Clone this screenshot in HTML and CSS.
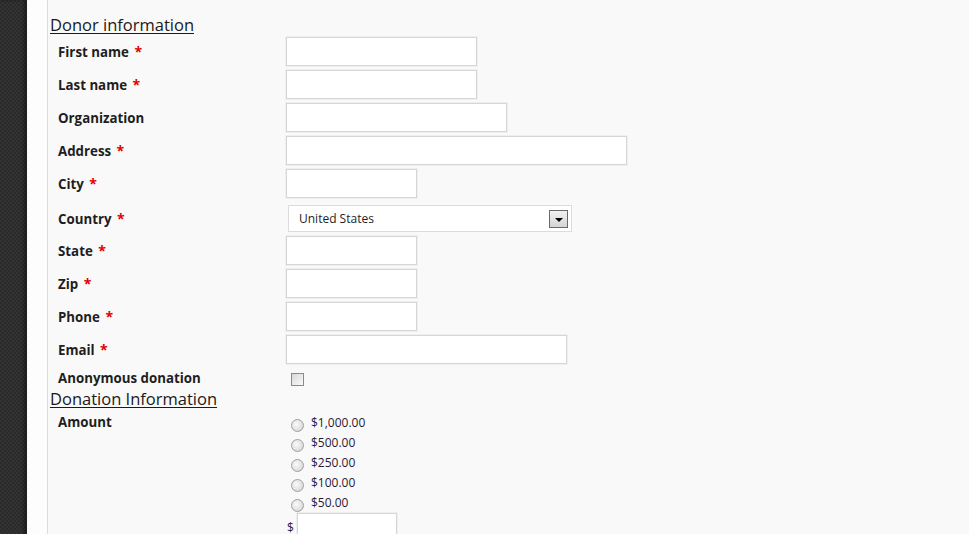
FILE: index.html
```html
<!DOCTYPE html>
<html lang="en">
<head>
    <meta charset="UTF-8">
    <title>Donation</title>
    <link rel="stylesheet" href="styles.css">
</head>
<body>
    <div class="sidebar"></div>
    <div class="gutter"></div>
    <div class="content">
        <h2 class="section-title">Donor information</h2>
        <div class="form-row">
            <label class="field-label">First name <span class="req">*</span></label>
            <input type="text" class="field w190">
        </div>
        <div class="form-row">
            <label class="field-label">Last name <span class="req">*</span></label>
            <input type="text" class="field w190">
        </div>
        <div class="form-row">
            <label class="field-label">Organization</label>
            <input type="text" class="field w220">
        </div>
        <div class="form-row">
            <label class="field-label">Address <span class="req">*</span></label>
            <input type="text" class="field w340">
        </div>
        <div class="form-row">
            <label class="field-label">City <span class="req">*</span></label>
            <input type="text" class="field w130">
        </div>
        <div class="form-row tall">
            <label class="field-label">Country <span class="req">*</span></label>
            <div class="select-box">
                <select class="select">
                    <option>United States</option>
                </select>
                <span class="select-arrow"></span>
            </div>
        </div>
        <div class="form-row">
            <label class="field-label">State <span class="req">*</span></label>
            <input type="text" class="field w130">
        </div>
        <div class="form-row">
            <label class="field-label">Zip <span class="req">*</span></label>
            <input type="text" class="field w130">
        </div>
        <div class="form-row">
            <label class="field-label">Phone <span class="req">*</span></label>
            <input type="text" class="field w130">
        </div>
        <div class="form-row">
            <label class="field-label">Email <span class="req">*</span></label>
            <input type="text" class="field w280">
        </div>
        <div class="form-row small">
            <label class="field-label">Anonymous donation</label>
            <input type="checkbox" class="check">
        </div>

        <h2 class="section-title">Donation Information</h2>
        <div class="amount-row">
            <label class="field-label">Amount</label>
            <div class="amount-list">
                <label class="amount-item"><input type="radio" name="amount" class="radio"> $1,000.00</label>
                <label class="amount-item"><input type="radio" name="amount" class="radio"> $500.00</label>
                <label class="amount-item"><input type="radio" name="amount" class="radio"> $250.00</label>
                <label class="amount-item"><input type="radio" name="amount" class="radio"> $100.00</label>
                <label class="amount-item"><input type="radio" name="amount" class="radio"> $50.00</label>
                <div class="other-amount">
                    <span class="dollar">$</span>
                    <input type="text" class="field w100">
                </div>
            </div>
        </div>
    </div>
</body>
</html>
```

FILE: styles.css
```css
/* Reset */
* {
    margin: 0;
    padding: 0;
    box-sizing: border-box;
}

body {
    display: flex;
    min-height: 534px;
    font-family: 'Open Sans', 'DejaVu Sans', sans-serif;
    background-color: #f9f9f9;
    color: #1e1e1e;
    overflow: hidden;
}

/* barra escura da esquerda */
.sidebar {
    width: 27px;
    flex-shrink: 0;
    background: repeating-conic-gradient(#2a2a2a 0 25%, #333 0 50%) 0 0 / 4px 4px;
    box-shadow: inset -3px 0 3px rgba(0, 0, 0, 0.35);
}

.gutter {
    width: 21px;
    flex-shrink: 0;
    background-color: #fdfdfd;
    border-right: 1px solid #dcdcdc;
}

.content {
    flex: 1;
    padding: 14px 0 0 2px;
}

.section-title {
    font-size: 16.5px;
    font-weight: normal;
    line-height: 22px;
    height: 21px;
    color: #1a1a1a;
    text-decoration: underline;
    text-underline-offset: 2px;
}

.form-row {
    display: flex;
    align-items: center;
    height: 33px;
}

.form-row.tall {
    height: 34px;
    padding-top: 2px;
}

.form-row.tall .select-box {
    margin-top: 1px;
}

.form-row.small {
    height: 22px;
    padding-top: 1px;
}

.field-label {
    width: 236px;
    flex-shrink: 0;
    padding-left: 8px;
    font-size: 13.3px;
    font-weight: bold;
    color: #1e1e1e;
}

.req {
    color: #e00000;
    font-size: 14px;
    margin-left: 2px;
}

.field {
    height: 29px;
    background-color: #fff;
    border: 1px solid #d6d6d6;
    box-shadow: 0 0 0 1px #efefef;
    outline: none;
    font-family: inherit;
    font-size: 12px;
    padding: 0 4px;
}

.w100 { width: 100px; }
.w130 { width: 131px; }
.w190 { width: 191px; }
.w220 { width: 221px; }
.w280 { width: 281px; }
.w340 { width: 341px; }

.select-box {
    position: relative;
    margin-left: 2px;
    width: 284px;
    height: 27px;
}

.select {
    appearance: none;
    width: 100%;
    height: 100%;
    background-color: #fff;
    border: 1px solid #dcdcdc;
    font-family: inherit;
    font-size: 12px;
    color: #1e1e1e;
    padding: 0 0 0 10px;
    outline: none;
}

.select-arrow {
    position: absolute;
    right: 4px;
    top: 5px;
    width: 19px;
    height: 18px;
    border: 1px solid #6a6a6a;
    background: linear-gradient(#f2f2f2, #d4d4d4);
    pointer-events: none;
}

.select-arrow::after {
    content: '';
    position: absolute;
    left: 5px;
    top: 7px;
    border-left: 4px solid transparent;
    border-right: 4px solid transparent;
    border-top: 4px solid #000;
}

.check {
    appearance: none;
    width: 13px;
    height: 13px;
    margin-left: 5px;
    margin-top: 3px;
    border: 1px solid #8a8a8a;
    background: linear-gradient(135deg, #d8d8d8, #fafafa);
}

.amount-row {
    display: flex;
    padding-top: 3px;
}

.amount-row .field-label {
    line-height: 20px;
}

.amount-list {
    display: flex;
    flex-direction: column;
}

.amount-item {
    display: flex;
    align-items: center;
    height: 20px;
    font-size: 12px;
    color: #2a1a3a;
    padding-left: 5px;
}

.radio {
    appearance: none;
    width: 13px;
    height: 13px;
    margin: 6px 7px 0 0;
    border-radius: 50%;
    border: 1px solid #a0a0a0;
    background: radial-gradient(circle at 40% 40%, #fafafa, #cfcfcf);
}

.other-amount {
    display: flex;
    align-items: center;
    padding-top: 1px;
}

.dollar {
    font-size: 12px;
    color: #2a1a3a;
    margin: 0 3px 0 1px;
}
```
